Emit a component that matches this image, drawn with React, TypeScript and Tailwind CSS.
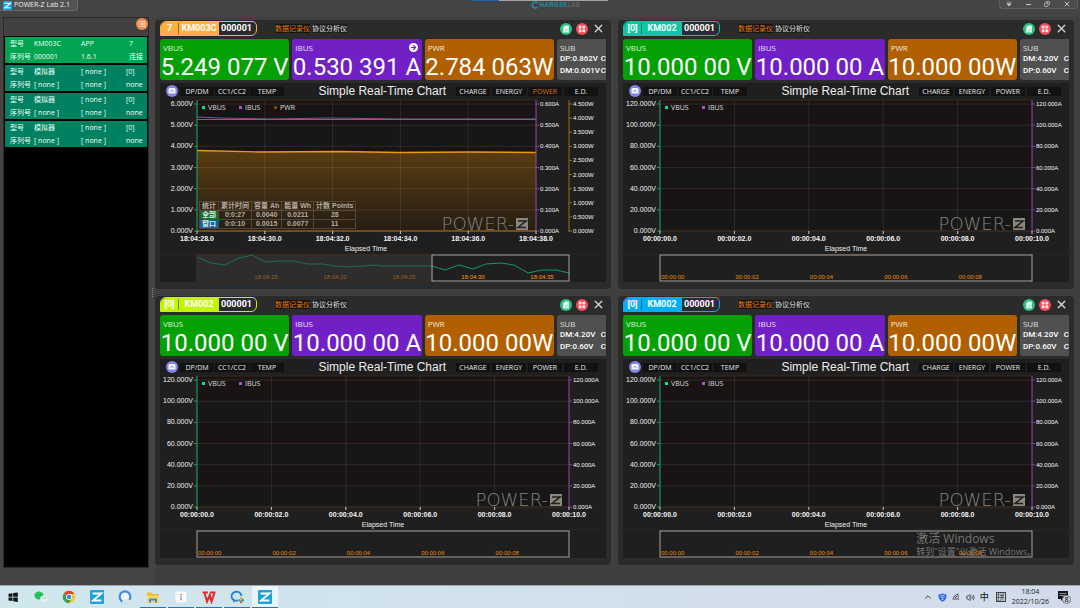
import type { ReactNode } from "react";
import { ArrowRight, ChevronUp, Copy, List, Minus, Volume2, Wifi, X } from "lucide-react";

type Reading = { vbus: string; ibus: string; pwr: string; sub: string[] };

type Meter = {
  id: string;
  slot: string;
  model: string;
  fill: string;
  border: string;
  live: boolean;
  reading: Reading;
};

const IDLE: Reading = {
  vbus: "10.000 00 V",
  ibus: "10.000 00 A",
  pwr: "10.000 00W",
  sub: ["DM:4.20V", "DP:0.60V"],
};

const METERS: Meter[] = [
  {
    id: "m1",
    slot: "7",
    model: "KM003C",
    fill: "bg-[#ffb040]",
    border: "border-[#ffb040]",
    live: true,
    reading: {
      vbus: "5.249 077 V",
      ibus: "0.530 391 A",
      pwr: "2.784 063W",
      sub: ["DP:0.862V", "DM:0.001V"],
    },
  },
  { id: "m2", slot: "[0]", model: "KM002", fill: "bg-[#0cc7a5]", border: "border-[#0cc7a5]", live: false, reading: IDLE },
  { id: "m3", slot: "[0]", model: "KM002", fill: "bg-[#c4f500]", border: "border-[#c4f500]", live: false, reading: IDLE },
  { id: "m4", slot: "[0]", model: "KM002", fill: "bg-[#04aef4]", border: "border-[#04aef4]", live: false, reading: IDLE },
];

const DEVICES = [
  { model: "KM003C", serial: "000001", app: "APP", version: "1.6.1", slot: "7", state: "连接", active: true },
  { model: "模拟器", serial: "[ none ]", app: "[ none ]", version: "[ none ]", slot: "[0]", state: "none", active: false },
  { model: "模拟器", serial: "[ none ]", app: "[ none ]", version: "[ none ]", slot: "[0]", state: "none", active: false },
  { model: "模拟器", serial: "[ none ]", app: "[ none ]", version: "[ none ]", slot: "[0]", state: "none", active: false },
];

const STATS = [
  { name: "全部", tone: "bg-[#146c34]", cells: ["0:0:27", "0.0040", "0.0211", "28"] },
  { name: "窗口", tone: "bg-[#1560a8]", cells: ["0:0:10", "0.0015", "0.0077", "11"] },
];

const PLOT_TOP = 5;
const PLOT_BOTTOM = 132;
const PLOT_LEFT = 37;

const HISTORY =
  "37,158 51,164 65,166 79,159 92,156 106,163 120,162 133,162 147,165 162,165 175,167 189,168 203,167 217,166 220,167 272,167 285,171 299,166 313,170 326,165 341,164 354,166 368,174 382,171 396,171 409,174";

function scale(max: number, steps: number, unit: string) {
  return Array.from({ length: steps + 1 }, (_, i) => ({
    label: `${(max - (max / steps) * i).toFixed(3)}${unit}`,
    y: PLOT_TOP + ((PLOT_BOTTOM - PLOT_TOP) / steps) * i,
  }));
}

function PowerZMark({ right }: { right: number }) {
  return (
    <g>
      <text x={right - 14} y={131} textAnchor="end" fill="#87837d" className="font-['DejaVu_Sans',sans-serif] text-[18px] font-extralight">
        POWER-
      </text>
      <rect x={right - 12} y={119} width={12} height={12} fill="#8a8680" />
      <path d={`M${right - 10} 122h8l-8 6.5h8`} fill="none" stroke="#25211c" strokeWidth={1.6} />
    </g>
  );
}

function Chart({ live, id }: { live: boolean; id: string }) {
  const right = live ? 376 : 409;
  const step = (right - PLOT_LEFT) / 5;
  const volts = scale(live ? 6 : 120, 6, "V");
  const amps = scale(live ? 0.6 : 120, 6, "A");
  const watts = scale(4.5, 9, "W");
  const times = live
    ? ["18:04:28.0", "18:04:30.0", "18:04:32.0", "18:04:34.0", "18:04:36.0", "18:04:38.0"]
    : ["00:00:00.0", "00:00:02.0", "00:00:04.0", "00:00:06.0", "00:00:08.0", "00:00:10.0"];
  const legend = [
    { name: "VBUS", color: "#00e68a", x: 42 },
    { name: "IBUS", color: "#b04fd0", x: 79 },
    { name: "PWR", color: "#7a4a00", x: 114 },
  ].slice(0, live ? 3 : 2);

  return (
    <svg viewBox="0 0 446 183" role="img" aria-label="Simple Real-Time Chart" className="block h-auto w-full overflow-visible font-['Liberation_Sans',sans-serif]">
      <defs>
        <linearGradient id={`${id}-power`} x1="0" y1="0" x2="0" y2="1">
          <stop offset="0" stopColor="#5a3d10" />
          <stop offset="1" stopColor="#261d13" />
        </linearGradient>
      </defs>

      <rect x={PLOT_LEFT} y={1} width={right - PLOT_LEFT} height={131} fill="#171717" />
      {[0, 2, 4].map((band) => (
        <rect key={band} x={PLOT_LEFT} y={band ? volts[band].y : 1} width={right - PLOT_LEFT} height={band ? 21 : 25} fill="#191413" />
      ))}
      {live && (
        <path d="M37 51.500L100 53L180 52.500L240 53.500L310 53L376 53.500V132H37Z" fill={`url(#${id}-power)`} />
      )}
      {volts.map(({ y }) => (
        <line key={y} x1={PLOT_LEFT} x2={right} y1={y} y2={y} stroke="#ffffff" strokeOpacity={0.09} />
      ))}
      {times.map((t, i) => (
        <line key={t} x1={PLOT_LEFT + step * i} x2={PLOT_LEFT + step * i} y1={1} y2={132} stroke="#ffffff" strokeOpacity={0.09} />
      ))}
      <line x1={PLOT_LEFT} x2={right} y1={1} y2={1} stroke="#3d281c" />
      <line x1={PLOT_LEFT} x2={right} y1={132} y2={132} stroke={live ? "#b87410" : "#3d281c"} />

      {live && (
        <g fill="none">
          <path d="M37 51.500L100 53L180 52.500L240 53.500L310 53L376 53.500" stroke="#f0980c" strokeWidth={1.4} />
          <path d="M37 20.500H376" stroke="#12a078" />
          <path d="M37 18L60 19L110 20L170 19L240 20H376" stroke="#8a4f9c" />
        </g>
      )}

      <line x1={PLOT_LEFT} x2={PLOT_LEFT} y1={1} y2={133} stroke="#12a06c" />
      <line x1={right} x2={right} y1={1} y2={133} stroke="#8a3f9c" />
      {volts.map(({ label, y }) => (
        <g key={label}>
          <line x1={34} x2={37} y1={y} y2={y} stroke="#12a06c" />
          <text x={33} y={y + 2} textAnchor="end" fill="#f0f0f0" className="text-[7px]">
            {label}
          </text>
        </g>
      ))}
      {amps.map(({ label, y }) => (
        <g key={label}>
          <line x1={right} x2={right + 3} y1={y} y2={y} stroke="#8a3f9c" />
          <text x={right + 4} y={y + 2} fill="#f4f4f4" className="text-[6px]">
            {label}
          </text>
        </g>
      ))}
      {live && (
        <g>
          <line x1={409} x2={409} y1={1} y2={133} stroke="#a8690c" />
          {watts.map(({ label, y }) => (
            <g key={label}>
              <line x1={409} x2={412} y1={y} y2={y} stroke="#a8690c" />
              <text x={413} y={y + 2} fill="#f4f4f4" className="text-[6px]">
                {label}
              </text>
            </g>
          ))}
        </g>
      )}
      {times.map((t, i) => (
        <g key={t}>
          <line x1={PLOT_LEFT + step * i} x2={PLOT_LEFT + step * i} y1={132} y2={135} stroke="#c8c8c8" />
          <text x={PLOT_LEFT + step * i} y={142} textAnchor="middle" fill="#f4f4f4" className="text-[7px] font-bold">
            {t}
          </text>
        </g>
      ))}
      <text x={live ? 206 : 223} y={152} textAnchor="middle" fill="#f0f0f0" className="text-[7px]">
        Elapsed Time
      </text>

      {legend.map((item) => (
        <g key={item.name}>
          <rect x={item.x} y={7} width={3} height={3} fill={item.color} />
          <text x={item.x + 6} y={11} fill="#dcdcdc" className="font-['Open_Sans',sans-serif] text-[7px]">
            {item.name}
          </text>
        </g>
      ))}
      <PowerZMark right={live ? 368 : 402} />

      <line x1={0} x2={446} y1={155} y2={155} stroke="#2c2725" />
      {live ? (
        <g>
          <rect x={37} y={156} width={235} height={26} fill="#2d2d2d" stroke="#463327" />
          <polyline points={HISTORY} fill="none" stroke="#15976a" />
          <rect x={37} y={156} width={235} height={26} fill="#2d2d2d" fillOpacity={0.4} />
          <rect x={272} y={156} width={137} height={26} fill="none" stroke="#aaa49c" />
        </g>
      ) : (
        <rect x={37} y={156} width={372} height={26} fill="none" stroke="#aaa49c" />
      )}
      {live
        ? ["18:04:15", "18:04:20", "18:04:25", "18:04:30", "18:04:35"].map((t, i) => (
            <text key={t} x={106 + 69 * i} y={180} textAnchor="middle" fill={i < 3 ? "#9a6222" : "#ff980f"} className="text-[6px]">
              {t}
            </text>
          ))
        : ["00:00:00", "00:00:02", "00:00:04", "00:00:06", "00:00:08"].map((t, i) => (
            <text key={t} x={38 + step * i} y={180} fill="#e88c10" className="text-[6px]">
              {t}
            </text>
          ))}
    </svg>
  );
}

function StatsTable() {
  return (
    <table className="absolute top-[102px] left-[39px] border-collapse text-center font-['Liberation_Sans','Noto_Sans_CJK_SC',sans-serif] text-[7px] leading-[8px] font-bold text-[#b4aca0]">
      <thead>
        <tr>
          {["统计", "累计时间", "容量 Ah", "能量 Wh", "计数 Points"].map((h) => (
            <th key={h} scope="col" className="border border-[#51483a] px-[2px] whitespace-nowrap">
              {h}
            </th>
          ))}
        </tr>
      </thead>
      <tbody>
        {STATS.map((row) => (
          <tr key={row.name}>
            <th scope="row" className={`border border-[#51483a] ${row.tone} text-[#dce8d8]`}>
              {row.name}
            </th>
            {row.cells.map((c) => (
              <td key={c} className="border border-[#51483a]">
                {c}
              </td>
            ))}
          </tr>
        ))}
      </tbody>
    </table>
  );
}

function Readout({ label, value, tone, icon }: { label: string; value: string; tone: string; icon?: ReactNode }) {
  return (
    <div className={`relative h-[41px] min-w-0 flex-1 overflow-hidden rounded-[3px] ${tone}`}>
      <div className="pt-[3px] pl-[3px] text-[8px] leading-[12px] text-white/85">{label}</div>
      <div className="text-center font-['Roboto',sans-serif] text-[24px] leading-[27px] whitespace-nowrap text-white">{value}</div>
      {icon}
    </div>
  );
}

function ToolButton({ children, on }: { children: string; on?: boolean }) {
  return (
    <button type="button" className={`h-[9px] w-[34px] bg-[#121212] text-[7px] leading-[9px] ${on ? "text-[#d8740c]" : "text-[#e8e8e8]"}`}>
      {children}
    </button>
  );
}

function MeterPanel({ meter }: { meter: Meter }) {
  const { reading } = meter;
  return (
    <section className="rounded-[4px] bg-[#2b2b2b] px-[5px] pb-[7px]">
      <header className="flex h-[19px] items-center pb-[2px]">
        <div className={`flex h-[15px] w-[97px] overflow-hidden rounded-tl-[6px] rounded-tr-[5px] rounded-br-[6px] border font-['Roboto',sans-serif] text-[9px] leading-[13px] font-bold text-white ${meter.border}`}>
          <div className={`flex w-[58px] items-center ${meter.fill}`}>
            <span className="w-[18px] border-r border-black/40 text-center leading-[11px]">{meter.slot}</span>
            <span className="flex-1 text-center">{meter.model}</span>
          </div>
          <span className="flex-1 pl-[2px]">000001</span>
        </div>
        <nav className="ml-[18px] flex gap-[2px] text-[7px] leading-[9px]">
          <a href="#recorder" className="bg-[#141414] text-[#e8780c]">数据记录仪</a>
          <a href="#protocol" className="bg-[#1c1c1c] text-[#e0e0e0]">协议分析仪</a>
        </nav>
        <div className="ml-auto flex items-center gap-[4px] pr-px">
          <button type="button" aria-label="Save" className="flex size-[12px] items-center justify-center rounded-full bg-[#2fbf80]">
            <svg viewBox="0 0 12 12" className="size-[12px]">
              <path d="M5 2.500h3.800v7H3.200V4.500z" fill="#e6fff4" />
              <path d="M5.500 8.500L7.500 6" fill="none" stroke="#2fbf80" strokeWidth={0.8} />
            </svg>
          </button>
          <button type="button" aria-label="Layout" className="flex size-[12px] items-center justify-center rounded-full bg-[#f24c5a]">
            <svg viewBox="0 0 12 12" className="size-[12px]">
              <path d="M2.800 2.800h2.700v2.700H2.800zM6.500 2.800h2.700v2.700H6.500zM2.800 6.500h2.700v2.700H2.800zM6.500 6.500h2.700v2.700H6.500z" fill="#ffecec" />
            </svg>
          </button>
          <button type="button" aria-label="Close" className="text-[#d4d4d4]">
            <X className="size-[13px]" strokeWidth={2.5} />
          </button>
        </div>
      </header>

      <div className="flex gap-[3px]">
        <Readout label="VBUS" value={reading.vbus} tone="bg-[#04a004]" />
        <Readout
          label="IBUS"
          value={reading.ibus}
          tone="bg-[#7020c4]"
          icon={
            meter.live && (
              <span className="absolute top-[4px] right-[4px] flex size-[9px] items-center justify-center rounded-full bg-white text-[#7020c4]">
                <ArrowRight className="size-[7px]" strokeWidth={4} />
              </span>
            )
          }
        />
        <Readout label="PWR" value={reading.pwr} tone="bg-[#b06000]" />
        <div className="h-[41px] w-[49px] overflow-hidden rounded-l-[3px] bg-[#505050] pl-[3px]">
          <div className="pt-[3px] text-[8px] leading-[11px] text-white/80">SUB</div>
          {reading.sub.map((line) => (
            <div key={line} className="flex justify-between font-['Roboto',sans-serif] text-[8px] leading-[12px] font-medium whitespace-nowrap text-white">
              <span>{line}</span>
              <span>C</span>
            </div>
          ))}
        </div>
      </div>

      <div className="mt-[3px] bg-[#1f1f1f]">
        <div className="flex h-[16px] items-center pr-[8px] pl-[6px]">
          <button type="button" aria-label="Collapse" className="mr-[2px] flex size-[12px] items-center justify-center rounded-full bg-[#8484e8]">
            <svg viewBox="0 0 12 12" className="size-[12px]">
              <path d="M3.500 3h5l1 1v4.500h-7V4z" fill="#f4f4ff" />
              <path d="M4.500 6.500L6 5.200L7.500 6.500" fill="none" stroke="#8484e8" />
            </svg>
          </button>
          <div className="flex gap-px">
            <ToolButton>DP/DM</ToolButton>
            <ToolButton>CC1/CC2</ToolButton>
            <ToolButton>TEMP</ToolButton>
          </div>
          <h2 className="flex-1 pr-[10px] text-right font-['Liberation_Sans',sans-serif] text-[12px] leading-[16px] whitespace-nowrap text-[#ececec]">
            Simple Real-Time Chart
          </h2>
          <div className="flex gap-[2px]">
            <ToolButton>CHARGE</ToolButton>
            <ToolButton>ENERGY</ToolButton>
            <ToolButton on={meter.live}>POWER</ToolButton>
            <ToolButton>E.D.</ToolButton>
          </div>
        </div>
        <div className="relative">
          <Chart live={meter.live} id={meter.id} />
          {meter.live && <StatsTable />}
        </div>
      </div>
    </section>
  );
}

function ZLogo({ className }: { className: string }) {
  return (
    <svg viewBox="0 0 14 14" className={className} aria-hidden="true">
      <rect width="14" height="14" rx="1" fill="#1ca3dc" />
      <path d="M2.500 3.500h9L3 10.500h8.500" fill="none" stroke="#fff" strokeWidth="1.800" />
    </svg>
  );
}

function TitleBar() {
  return (
    <header className="relative flex h-[17px] items-start justify-between">
      <div className="flex h-[11px] items-center gap-[2px] rounded-br-[3px] border-r border-b border-[#686868] bg-[#525252] pr-[7px] pl-[3px]">
        <ZLogo className="size-[9px]" />
        <h1 className="text-[7px] leading-[10px] text-[#f0f0f0]">POWER-Z Lab 2.1</h1>
      </div>
      <div className="absolute top-0 left-1/2 flex h-px w-[136px] -translate-x-1/2">
        <span className="w-[27px] bg-[#1c68b0]" />
        <span className="flex-1 bg-[#a4a4a4]" />
      </div>
      <div className="absolute top-0 left-1/2 flex h-[9px] items-center text-[7px] leading-[9px]">
        <svg viewBox="0 0 8 8" className="-ml-[9px] size-[8px]" aria-hidden="true">
          <path d="M6.500 2A3 3 0 1 0 6.500 6" fill="none" stroke="#1d92a4" strokeWidth="1.600" />
        </svg>
        <span className="font-bold text-[#1d8797]">HARGER</span>
        <span className="text-[#707070]">LAB</span>
      </div>
      <div className="mr-[2px] flex h-[9px] w-[79px] items-center justify-around rounded-b-[4px] border border-t-0 border-[#606060] bg-[#4c4c4c] text-[#c4c4c4]">
        <button type="button" aria-label="Menu">
          <svg viewBox="0 0 8 8" className="size-[6px]">
            <path d="M1 1.500h6M1 3.500h6L4 7z" fill="#c4c4c4" stroke="#c4c4c4" strokeWidth="0.800" />
          </svg>
        </button>
        <button type="button" aria-label="Minimize"><Minus className="size-[7px]" strokeWidth={4} /></button>
        <button type="button" aria-label="Restore"><Copy className="size-[6px] -scale-x-100" strokeWidth={3} /></button>
        <button type="button" aria-label="Close window"><X className="size-[8px]" strokeWidth={3} /></button>
      </div>
    </header>
  );
}

function DeviceList() {
  return (
    <aside className="mb-[17px] ml-[3px] flex w-[146px] shrink-0 flex-col border border-[#2c2c2c] bg-black">
      <div className="flex h-[18px] items-start justify-end bg-[#414141]">
        <button type="button" aria-label="Device list" className="flex size-[12px] items-center justify-center rounded-full bg-[#f58a4c] text-white">
          <List className="size-[8px]" strokeWidth={3} />
        </button>
      </div>
      <ul className="flex flex-col gap-[2px] px-px pt-px">
        {DEVICES.map((d, i) => (
          <li
            key={i}
            className={`grid h-[26px] grid-cols-[24px_47px_45px_1fr] content-center pl-[5px] text-[7px] leading-[13px] whitespace-nowrap text-[#ecfff6] ${d.active ? "bg-[#00a453]" : "bg-[#008262]"}`}
          >
            <span>型号</span>
            <span>{d.model}</span>
            <span>{d.app}</span>
            <span className={d.active ? "pl-[3px]" : ""}>{d.slot}</span>
            <span>序列号</span>
            <span>{d.serial}</span>
            <span>{d.version}</span>
            <span className={d.active ? "pl-[3px]" : ""}>{d.state}</span>
          </li>
        ))}
      </ul>
    </aside>
  );
}

const APPS: { name: string; open?: boolean; active?: boolean; icon: ReactNode }[] = [
  {
    name: "Start",
    icon: <path d="M2.500 3.800L6.500 3.200V6.800H2.500zM7.200 3.100L11.800 2.400V6.800H7.200zM2.500 7.500H6.500V11.100L2.500 10.500zM7.200 7.500H11.800V11.900L7.200 11.200z" fill="#101418" />,
  },
  {
    name: "WeChat",
    icon: (
      <>
        <ellipse cx="5" cy="5.500" rx="4.600" ry="4" fill="#22c45c" />
        <ellipse cx="10" cy="8.800" rx="3.800" ry="3.200" fill="#e8eeee" />
        <path d="M3.500 4.500h.8M6 4.500h.8M8.500 8h.8M10.800 8h.8" stroke="#507060" strokeWidth="0.800" />
      </>
    ),
  },
  {
    name: "Chrome",
    icon: (
      <>
        <circle cx="7" cy="7" r="6.200" fill="#f8c828" />
        <path d="M7 7L1.600 3.900A6.200 6.200 0 0 1 12.400 3.900H7z" fill="#dc4838" />
        <path d="M7 7L1.600 3.900A6.200 6.200 0 0 0 7 13.200L9.600 8.600z" fill="#38a050" />
        <circle cx="7" cy="7" r="3" fill="#fff" />
        <circle cx="7" cy="7" r="2.300" fill="#4484ec" />
      </>
    ),
  },
  { name: "POWER-Z", icon: <ZLogo className="size-full" /> },
  {
    name: "QQ Browser",
    icon: (
      <>
        <circle cx="7" cy="6.800" r="5.400" fill="#f0f8ff" stroke="#3c8ce0" strokeWidth="2.200" />
        <path d="M4 13c-.5-3 2.500-4.500 4.500-3.500c2-.8 5 .5 4.800 3.500z" fill="#dce2ee" />
      </>
    ),
  },
  {
    name: "Explorer",
    open: true,
    icon: (
      <>
        <path d="M1 2.500h4.500l1 1.500H13v8.500H1z" fill="#f4b830" />
        <path d="M1 5.500h12v7H1z" fill="#fcd868" />
        <path d="M3 12.500V8.500h8v4H9v-2H5v2z" fill="#3c90d0" />
      </>
    ),
  },
  {
    name: "Meter",
    open: true,
    icon: (
      <>
        <rect x="1.500" y="1.500" width="11" height="11" rx="2" fill="#fcfcfc" />
        <path d="M6 4.500h2M6 6.300h1.500M6 8h2M6 9.700h2" stroke="#707070" strokeWidth="0.800" />
      </>
    ),
  },
  {
    name: "WPS",
    open: true,
    icon: <path d="M.5 2.500H6M2.500 3L5 11.500L7.800 5L9.500 11.500L12.500 3M8 2.500h5.500" fill="none" stroke="#e02c28" strokeWidth="2" />,
  },
  {
    name: "WeCom",
    open: true,
    icon: (
      <>
        <path d="M8 10.500A5 4.500 0 1 1 11.500 6" fill="none" stroke="#2c80dc" strokeWidth="1.800" />
        <path d="M3.500 10L3 12.500L6 11" fill="#2c80dc" />
        <circle cx="11.200" cy="8.300" r="1.200" fill="#f0a020" />
        <circle cx="9.300" cy="10.200" r="1.200" fill="#48b858" />
        <circle cx="12.700" cy="10.300" r="1.200" fill="#2c80dc" />
        <circle cx="11" cy="12" r="1.200" fill="#e05838" />
      </>
    ),
  },
  { name: "POWER-Z Lab", open: true, active: true, icon: <ZLogo className="size-full" /> },
];

function Taskbar() {
  return (
    <footer className="flex h-[23px] items-stretch justify-between border-t border-[#9aa8b0] bg-linear-to-r from-[#d0e7ee] to-[#d3dbea] text-[#202428]">
      <div className="flex items-stretch gap-[2px]">
        {APPS.map((app) => (
          <button
            key={app.name}
            type="button"
            aria-label={app.name}
            className={`flex w-[26px] flex-col items-center justify-center border-b ${app.open ? "border-[#1c78c4]" : "border-transparent"} ${app.active ? "bg-[#eaf5f9]" : ""}`}
          >
            <svg viewBox="0 0 14 14" className="size-[14px]">
              {app.icon}
            </svg>
          </button>
        ))}
      </div>
      <div className="flex items-center pr-[9px]">
        <div className="flex items-center gap-[5px]">
          <ChevronUp className="size-[10px]" />
          <svg viewBox="0 0 10 10" className="size-[9px]" aria-hidden="true">
            <path d="M5 .5L9.500 2C9.500 6 8 8.500 5 9.800C2 8.500.5 6 .5 2z" fill="#3064f0" />
            <path d="M2.500 3.500Q5 2 7.500 3.500M3.500 5.200Q5 4.200 6.500 5.200" fill="none" stroke="#fff" strokeWidth="0.800" />
            <circle cx="5" cy="7" r="0.800" fill="#fff" />
          </svg>
          <Wifi className="size-[9px] -rotate-45" />
          <Volume2 className="size-[9px]" />
          <span className="text-[9px] leading-[12px] font-medium">中</span>
          <span className="ml-[2px] border border-[#404040] text-[8px] leading-[8px]">拼</span>
        </div>
        <div className="ml-[6px] text-center text-[7px] leading-[10px]">
          <div>18:04</div>
          <div>2022/10/26</div>
        </div>
        <button type="button" aria-label="8 notifications" className="relative ml-[8px]">
          <svg viewBox="0 0 14 14" className="size-[14px]">
            <path d="M1 1h10v8H5.500L4 11V9H1z" fill="#14181c" />
            <path d="M2.500 3.500h7M2.500 5.500h7" stroke="#dce4ec" strokeWidth="0.600" />
          </svg>
          <span className="absolute right-0 bottom-0 flex size-[9px] items-center justify-center rounded-full border border-[#687078] bg-[#dce0e8] text-[7px] leading-[7px] font-semibold">8</span>
        </button>
      </div>
    </footer>
  );
}

export default function App() {
  return (
    <div className="relative flex min-h-screen flex-col bg-[#444444] font-['Open_Sans','Noto_Sans_CJK_SC',sans-serif]">
      <TitleBar />
      <div className="flex flex-1">
        <DeviceList />
        <div className="flex w-[6px] shrink-0 items-center justify-center pb-[17px]">
          <span className="h-[9px] border-l border-dotted border-[#8c8c8c]" />
        </div>
        <main className="grid flex-1 grid-cols-2 content-start gap-[7px] bg-[#3f3f3f] pt-[3px] pr-[6px] pb-[20px]">
          {METERS.map((m) => (
            <MeterPanel key={m.id} meter={m} />
          ))}
        </main>
      </div>
      <Taskbar />
      <div className="pointer-events-none absolute right-[44px] bottom-[50px] text-[#8e8e8e]/80">
        <p className="text-[12px] leading-[15px]">激活 Windows</p>
        <p className="text-[9px] leading-[12px]">转到"设置"以激活 Windows。</p>
      </div>
    </div>
  );
}
